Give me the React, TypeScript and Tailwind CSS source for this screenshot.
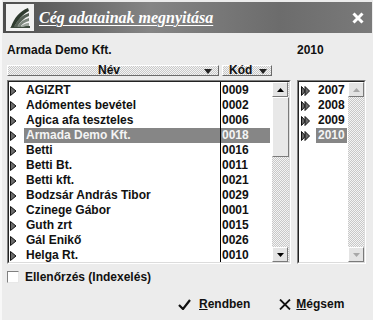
import React from "react";

const names = [
  "AGIZRT",
  "Adómentes bevétel",
  "Agica afa teszteles",
  "Armada Demo Kft.",
  "Betti",
  "Betti Bt.",
  "Betti kft.",
  "Bodzsár András Tibor",
  "Czinege Gábor",
  "Guth zrt",
  "Gál Enikő",
  "Helga Rt.",
];
const codes = ["0009", "0002", "0006", "0018", "0016", "0011", "0021", "0029", "0001", "0015", "0026", "0010"];
const years = ["2007", "2008", "2009", "2010"];

const hatch = "bg-[repeating-conic-gradient(#c8c8c8_0_25%,#f4f4f4_0_50%)] bg-[length:2px_2px]";

function Tri() {
  return (
    <svg width="7" height="10" viewBox="0 0 7 10" className="shrink-0">
      <path d="M0.5 0.5 L6 5 L0.5 9.5 Z" fill="#6a6a6a" stroke="#111" strokeWidth="1" />
    </svg>
  );
}

function DoubleTri() {
  return (
    <svg width="9" height="10" viewBox="0 0 9 10" className="shrink-0">
      <path d="M0.5 0.5 L4.5 5 L0.5 9.5 Z" fill="#6a6a6a" stroke="#111" strokeWidth="1" />
      <path d="M4 0.5 L8.5 5 L4 9.5 Z" fill="#6a6a6a" stroke="#111" strokeWidth="1" />
    </svg>
  );
}

function ScrollBtn({ dir, disabled }: { dir: "up" | "down"; disabled?: boolean }) {
  return (
    <div className="w-[16px] h-[15px] bg-[#e4e4e4] border-t border-l border-t-white border-l-white border-r border-b border-r-[#7a7a7a] border-b-[#7a7a7a] flex items-center justify-center">
      <svg width="7" height="4" viewBox="0 0 7 4">
        {dir === "up" ? (
          <path d="M0 4 L3.5 0 L7 4 Z" fill={disabled ? "#a8a8a8" : "#000"} />
        ) : (
          <path d="M0 0 L3.5 4 L7 0 Z" fill={disabled ? "#a8a8a8" : "#000"} />
        )}
      </svg>
    </div>
  );
}

export default function App() {
  return (
    <div className="w-[373px] h-[320px] bg-[#ececec] overflow-hidden font-['Liberation_Sans',Arial,sans-serif] font-bold text-[12px] text-[#111] border-l-2 border-l-[#f8f8f8]">
      {/* Title bar */}
      <div className="mt-[2px] mx-[1px] h-[31px] flex items-center bg-[linear-gradient(90deg,#4e4e4e_0%,#666_18%,#858585_40%,#7a7a7a_55%,#6c6c6c_75%,#7a7a7a_100%)]">
        <div className="ml-[3px] w-[28px] h-[27px] bg-[#f2f2f2] flex items-center justify-center">
          <svg width="24" height="24" viewBox="0 0 24 24">
            <path d="M2 22 L22 22 L22 20 L4 20 Z" fill="#3e4a3e" />
            <path d="M3 21 C6 12 12 5 20 2 L21 5 C15 8 10 14 6 21 Z" fill="#2f3b2f" />
            <path d="M6 21 C9 14 14 9 21 7 L21 10 C16 12 12 16 9 21 Z" fill="#556055" />
            <path d="M9 21 C12 16 16 13 21 12 L21 15 C17 16 14 18 12 21 Z" fill="#7b857b" />
            <path d="M12 21 C14 19 18 17 21 17 L21 20 C18 20 16 20.5 15 21 Z" fill="#9aa39a" />
          </svg>
        </div>
        <span className="ml-[5px] font-['Liberation_Serif',serif] italic font-bold text-[16px] text-white underline underline-offset-[2px] decoration-1 leading-none">
          Cég adatainak megnyitása
        </span>
        <div className="ml-auto mr-[8px]">
          <svg width="12" height="12" viewBox="0 0 12 12">
            <path d="M1.5 1.5 L10.5 10.5 M10.5 1.5 L1.5 10.5" stroke="#fff" strokeWidth="3" />
          </svg>
        </div>
      </div>

      <div className="px-[5px]">
        {/* labels */}
        <div className="mt-[10px] h-[14px] flex items-center">
          <span className="w-[290px]">Armada Demo Kft.</span>
          <span>2010</span>
        </div>

        <div className="mt-[8px] flex">
          {/* left column */}
          <div className="w-[284px] flex flex-col">
            <div className="h-[11px] flex">
              <div className={`w-[212px] h-[11px] border-t border-l border-t-white border-l-white border-b border-r border-b-[#6a6a6a] border-r-[#6a6a6a] ${hatch} flex items-center relative`}>
                <span className="absolute left-[90px] top-[-2px] leading-[13px]">Név</span>
                <svg width="8" height="5" viewBox="0 0 8 5" className="absolute right-[6px] top-[3px]">
                  <path d="M0 0 L4 5 L8 0 Z" fill="#222" />
                </svg>
              </div>
              <div className={`ml-[3px] w-[50px] h-[11px] border-t border-l border-t-white border-l-white border-b border-r border-b-[#6a6a6a] border-r-[#6a6a6a] ${hatch} relative`}>
                <span className="absolute left-[6px] top-[-2px] leading-[13px]">Kód</span>
                <svg width="8" height="5" viewBox="0 0 8 5" className="absolute right-[4px] top-[3px]">
                  <path d="M0 0 L4 5 L8 0 Z" fill="#222" />
                </svg>
              </div>
            </div>
            <div className="mt-[4px] h-[184px] border-t border-l border-t-[#808080] border-l-[#808080] border-r border-b border-r-white border-b-white">
              <div className="h-full border-t border-l border-t-[#222] border-l-[#222] border-r border-b border-r-[#dcdcdc] border-b-[#dcdcdc] bg-white flex">
                <div className="w-[211px] flex flex-col pt-[1px]">
                  {names.map((n, i) => (
                    <div key={n} className="h-[15.1px] flex items-center pl-[1px]">
                      <Tri />
                      <span className={`ml-[7px] px-[2px] leading-[15px] flex-1 ${i === 3 ? "bg-[#868686] text-[#f4f4f4]" : ""}`}>{n}</span>
                    </div>
                  ))}
                </div>
                <div className="w-[50px] border-l border-l-black flex flex-col pt-[1px]">
                  {codes.map((c, i) => (
                    <div key={c + i} className={`h-[15.1px] leading-[15px] pl-[1px] ${i === 3 ? "bg-[#868686] text-[#f4f4f4]" : ""}`}>
                      {c}
                    </div>
                  ))}
                </div>
                <div className={`w-[17px] ml-auto flex flex-col ${hatch}`}>
                  <ScrollBtn dir="up" />
                  <div className="h-[60px] bg-[#e8e8e8] border-t border-l border-t-white border-l-white border-r border-b border-r-[#7a7a7a] border-b-[#7a7a7a]" />
                  <div className="flex-1" />
                  <ScrollBtn dir="down" />
                </div>
              </div>
            </div>
          </div>

          {/* right column */}
          <div className="ml-[6px] w-[69px] flex flex-col">
            <div className="h-[15px]" />
            <div className="h-[184px] border-t border-l border-t-[#808080] border-l-[#808080] border-r border-b border-r-white border-b-white">
              <div className="h-full border-t border-l border-t-[#222] border-l-[#222] border-r border-b border-r-[#dcdcdc] border-b-[#dcdcdc] bg-white flex">
                <div className="flex-1 flex flex-col pt-[1px]">
                  {years.map((y) => (
                    <div key={y} className="h-[15.1px] flex items-center pl-[2px]">
                      <DoubleTri />
                      <span className={`ml-[6px] px-[2px] leading-[15px] ${y === "2010" ? "bg-[#868686] text-[#f4f4f4]" : ""}`}>{y}</span>
                    </div>
                  ))}
                </div>
                <div className={`w-[16px] flex flex-col ${hatch}`}>
                  <ScrollBtn dir="up" disabled />
                  <div className="flex-1" />
                  <ScrollBtn dir="down" disabled />
                </div>
              </div>
            </div>
          </div>
        </div>

        {/* checkbox */}
        <div className="mt-[6px] flex items-center h-[13px]">
          <div className="w-[12px] h-[12px] bg-white border-t border-l border-t-[#808080] border-l-[#808080] border-r border-b border-r-[#e8e8e8] border-b-[#e8e8e8]" />
          <span className="ml-[6px]">Ellenőrzés (Indexelés)</span>
        </div>

        {/* buttons */}
        <div className="mt-[14px] flex items-center h-[14px]">
          <div className="ml-[171px] flex items-center">
            <svg width="13" height="11" viewBox="0 0 13 11">
              <path d="M1 6 L5 10 L12 1" fill="none" stroke="#111" strokeWidth="2.2" />
            </svg>
            <span className="ml-[8px]"><span className="underline">R</span>endben</span>
          </div>
          <div className="ml-[29px] flex items-center">
            <svg width="12" height="11" viewBox="0 0 12 11">
              <path d="M1 0.5 L11 10.5 M11 0.5 L1 10.5" stroke="#111" strokeWidth="1.8" />
            </svg>
            <span className="ml-[5px]"><span className="underline">M</span>égsem</span>
          </div>
        </div>
      </div>
    </div>
  );
}
